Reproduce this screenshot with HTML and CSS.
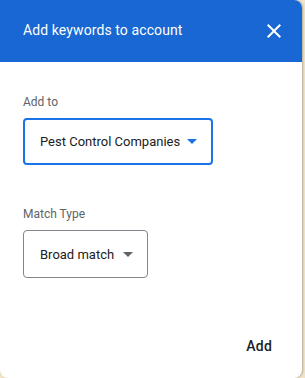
FILE: index.html
```html
<!DOCTYPE html>
<html>
<head>
<meta charset="utf-8">
<link rel="stylesheet" href="styles.css">
</head>
<body>
<div class="dialog">
  <div class="header">
    <span class="title">Add keywords to account</span>
    <svg class="close" viewBox="0 0 24 24" width="24" height="24"><path d="M19 6.41L17.59 5 12 10.59 6.41 5 5 6.41 10.59 12 5 17.59 6.41 19 12 13.41 17.59 19 19 17.59 13.41 12z" fill="#fff"/></svg>
  </div>
  <div class="content">
    <div class="field">
      <div class="label">Add to</div>
      <div class="select focused">
        <span>Pest Control Companies</span>
        <span class="arrow blue"></span>
      </div>
    </div>
    <div class="field second">
      <div class="label">Match Type</div>
      <div class="select">
        <span>Broad match</span>
        <span class="arrow"></span>
      </div>
    </div>
  </div>
  <div class="actions">
    <span class="btn">Add</span>
  </div>
</div>
</body>
</html>
```
FILE: styles.css
```css
html, body { margin: 0; padding: 0; }
body {
  background: #efe4c9;
  font-family: Roboto, "Noto Sans", sans-serif;
  width: 305px;
  height: 378px;
  overflow: hidden;
}
.dialog {
  width: 302px;
  height: 378px;
  background: #fff;
  border-radius: 0 8px 8px 8px;
  box-shadow: 1px 0 2px rgba(0,0,0,0.25);
  display: flex;
  flex-direction: column;
  overflow: hidden;
}
.header {
  background: #1967d2;
  height: 62px;
  display: flex;
  align-items: center;
  justify-content: space-between;
  padding: 0 16px 0 23px;
  flex-shrink: 0;
}
.title {
  color: #fff;
  font-size: 14px;
  font-weight: 400;
  letter-spacing: 0.1px;
  margin-top: -2px;
}
.close { width: 24px; height: 24px; margin-top: -1px; }
.content {
  padding: 32px 23px 0;
  flex: 1;
}
.label {
  color: #5f6368;
  font-size: 12px;
  line-height: 16px;
  margin-bottom: 8px;
}
.field.second { margin-top: 41px; }
.select {
  display: inline-flex;
  align-items: center;
  box-sizing: border-box;
  height: 48px;
  border: 1px solid #80868b;
  border-radius: 4px;
  padding: 0 14px 0 16px;
  font-size: 13px;
  color: #202124;
  gap: 9px;
}
.select.focused {
  border: 2px solid #1a73e8;
  height: 47px;
  padding: 0 14px 0 15px;
  gap: 7px;
}
.arrow {
  width: 0; height: 0;
  border-left: 5px solid transparent;
  border-right: 5px solid transparent;
  border-top: 5px solid #5f6368;
}
.arrow.blue { border-top-color: #1a73e8; }
.actions {
  display: flex;
  justify-content: flex-end;
  padding: 0 30px 24px 0;
}
.btn {
  font-size: 14px;
  font-weight: 500;
  color: #202124;
  letter-spacing: 0.2px;
}
```
